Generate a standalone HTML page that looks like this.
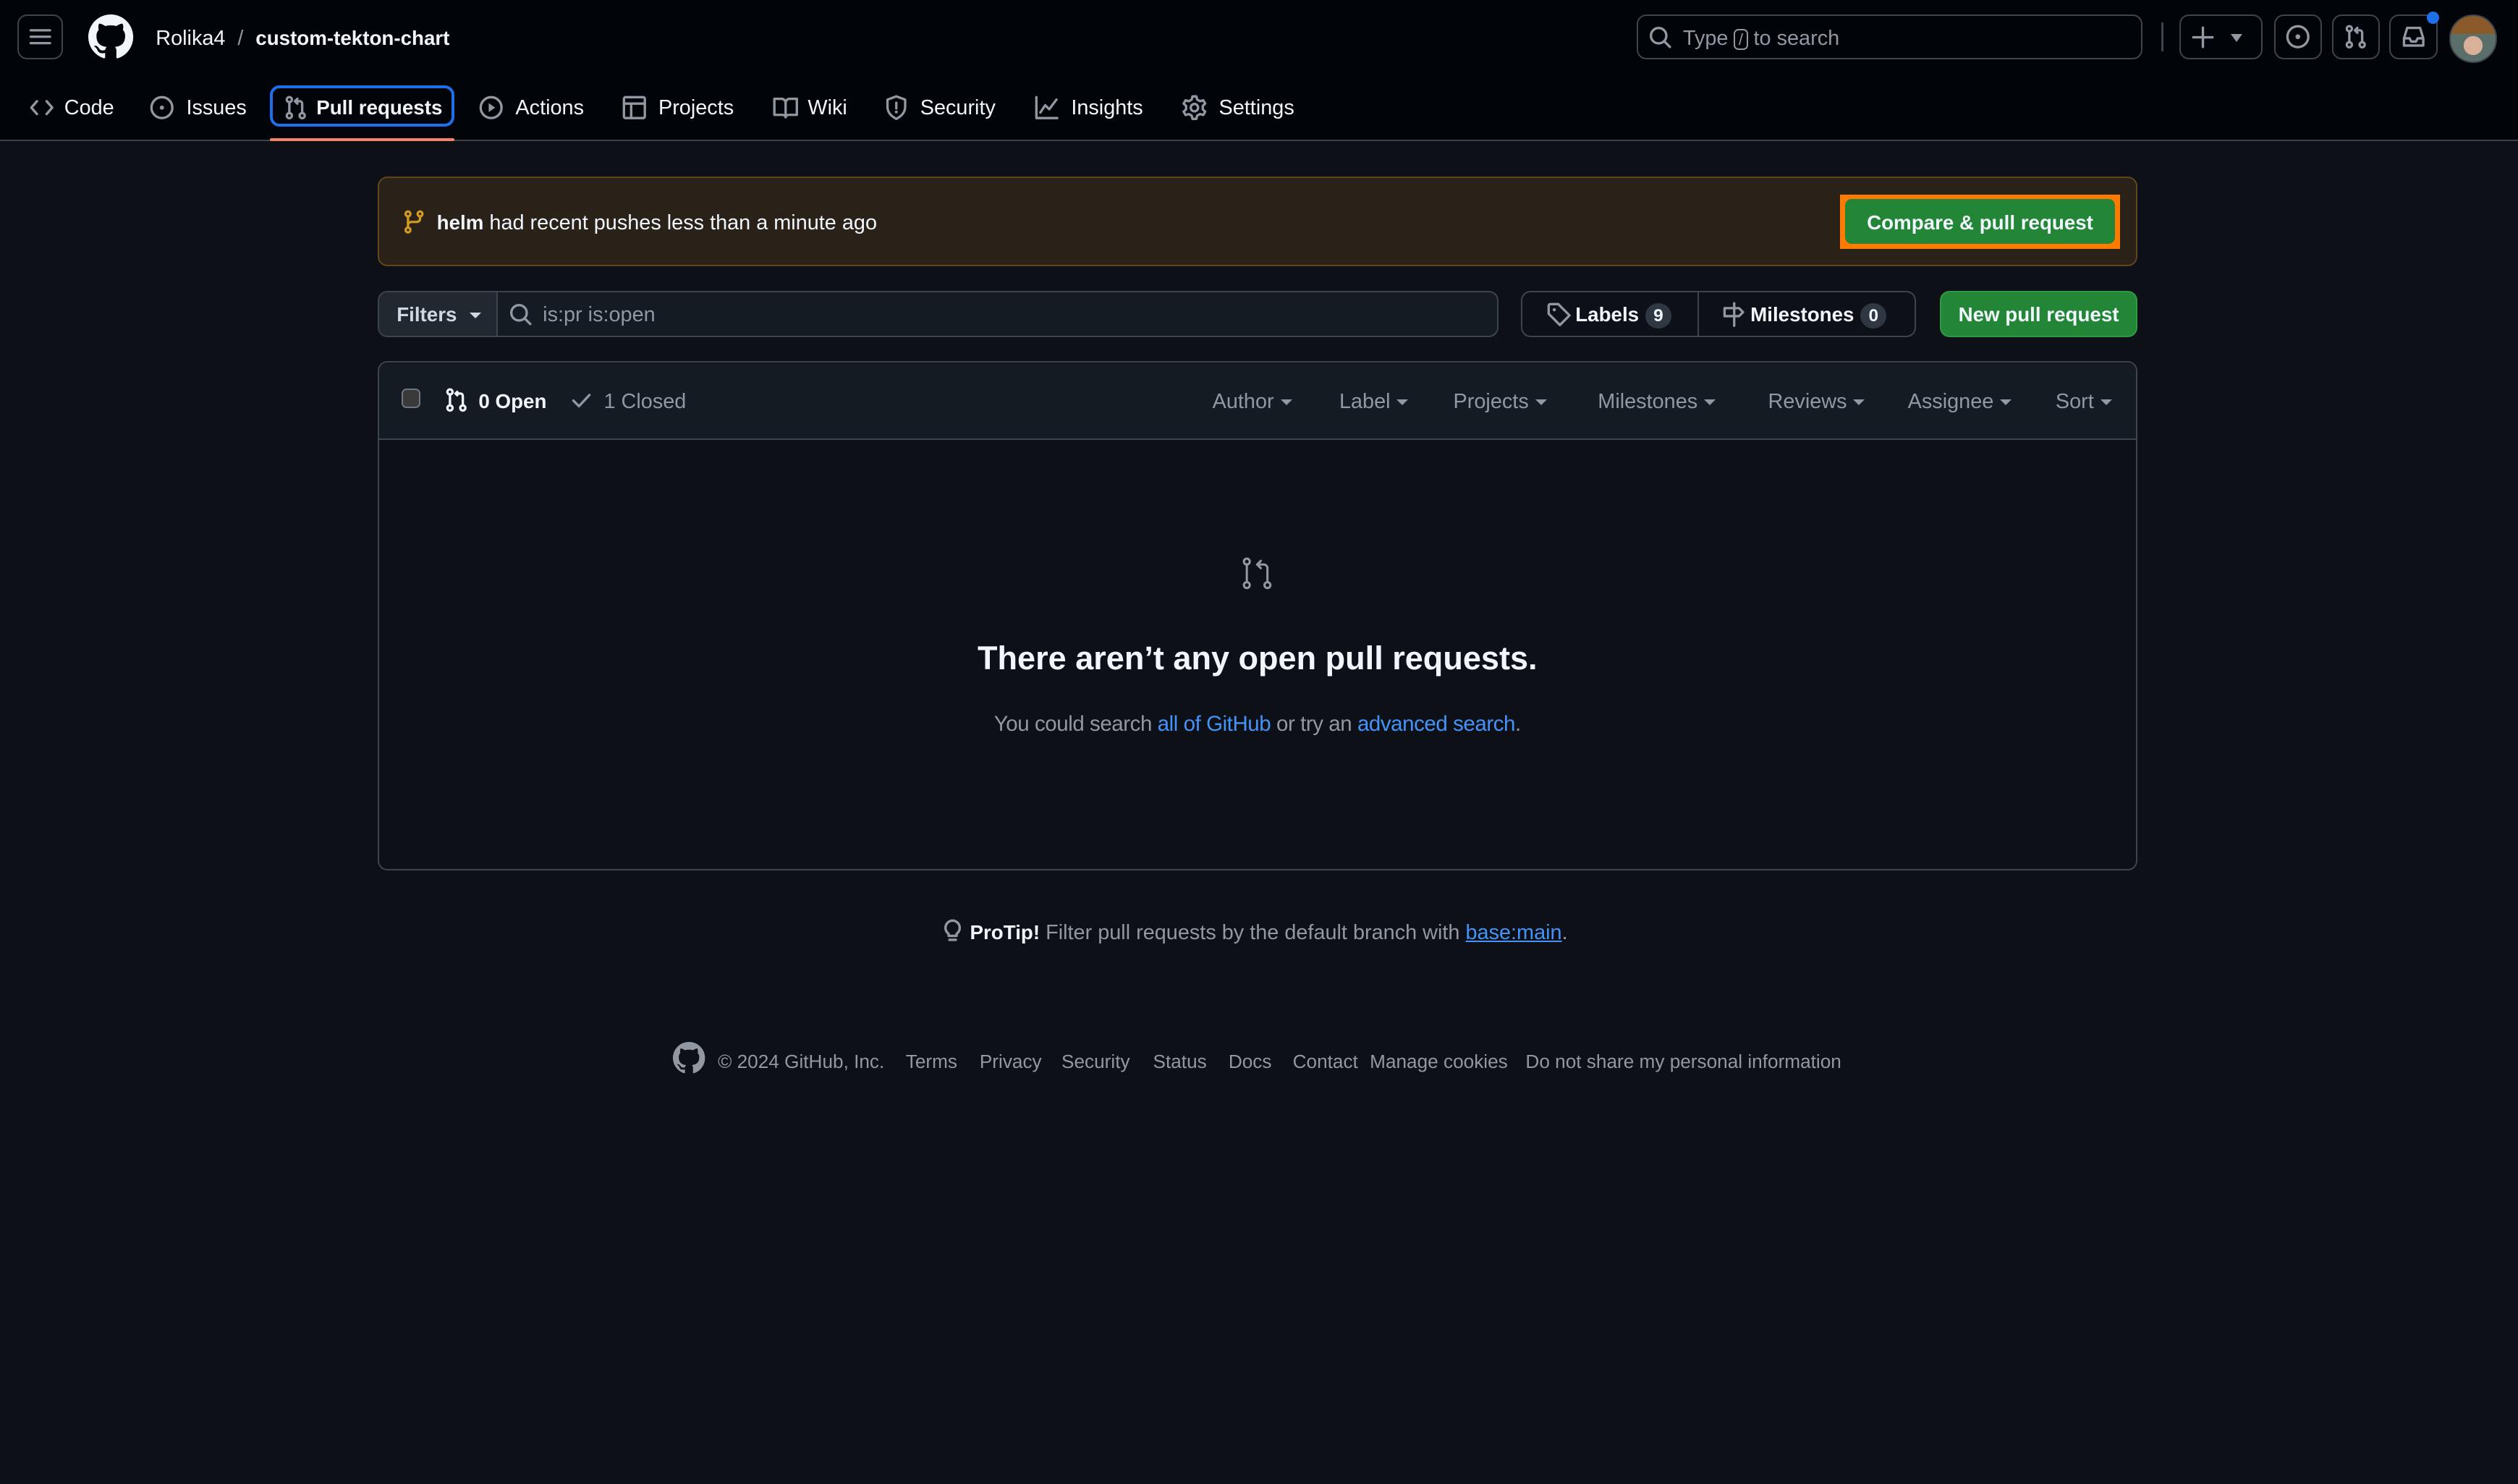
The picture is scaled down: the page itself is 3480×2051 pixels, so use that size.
<!DOCTYPE html>
<html><head><meta charset="utf-8">
<style>
html,body{margin:0;padding:0;background:#0d1117;}
body{width:3480px;height:2050px;overflow:hidden;}
#r{position:relative;width:1568px;height:924px;zoom:2.2194;background:#0d1117;font-family:"Liberation Sans",sans-serif;color:#f0f6fc;font-size:13px;}
.a{position:absolute;white-space:nowrap;line-height:20px;margin-top:1px;}
svg{position:absolute;overflow:visible;}
.ic{fill:none;stroke:#9198a1;stroke-width:1.5;stroke-linecap:round;stroke-linejoin:round;}
.btn{position:absolute;box-sizing:border-box;border:1px solid #3d444d;border-radius:6px;}
.m{color:#9198a1;}
.b{font-weight:bold;font-size:12.5px;}
.car{display:inline-block;width:0;height:0;border-left:4px solid transparent;border-right:4px solid transparent;border-top:4px solid currentColor;vertical-align:middle;margin-left:4px;}
.cnt{display:inline-block;background:#2f3742;border-radius:10px;padding:0 5px;font-size:11px;line-height:16px;margin-left:4px;}
a{color:#4493f8;text-decoration:none;}
</style></head><body><div id="r">
<div style="position:absolute;left:0;top:0;width:1568px;height:88px;background:#010409;border-bottom:1px solid #3d444d;box-sizing:border-box;"></div>
<div class="btn" style="left:11px;top:9px;width:28px;height:28px;"></div>
<svg style="left:17px;top:15px" width="16" height="16"><path class="ic" d="M2 4h12M2 8h12M2 12h12"/></svg>
<svg style="left:55px;top:9px" width="28" height="28" viewBox="0 0 16 16"><path fill="#f0f6fc" d="M8 0c4.42 0 8 3.58 8 8a8.013 8.013 0 0 1-5.45 7.59c-.4.08-.55-.17-.55-.38 0-.27.01-1.13.01-2.2 0-.75-.25-1.23-.54-1.48 1.78-.2 3.65-.88 3.65-3.95 0-.88-.31-1.59-.82-2.150.08-.2.36-1.02-.08-2.12 0 0-.67-.22-2.2.82-.64-.18-1.32-.27-2-.27-.68 0-1.36.09-2 .27-1.53-1.03-2.2-.82-2.2-.82-.44 1.1-.16 1.92-.08 2.12-.51.56-.82 1.28-.82 2.15 0 3.06 1.86 3.75 3.64 3.95-.23.2-.44.55-.51 1.07-.46.21-1.61.55-2.33-.66-.15-.24-.6-.83-1.23-.82-.67.01-.27.38.01.53.34.19.73.9.82 1.13.16.45.68 1.31 2.69.94 0 .67.01 1.3.01 1.49 0 .21-.15.45-.55.38A7.995 7.995 0 0 1 0 8c0-4.42 3.58-8 8-8Z"/></svg>
<div class="a" style="left:97px;top:13px;">Rolika4 <span class="m" style="margin:0 4px;">/</span> <span class="b">custom-tekton-chart</span></div>

<div class="btn" style="left:1019px;top:9px;width:315px;height:28px;"></div>
<svg style="left:1027px;top:16px" width="14" height="14"><circle class="ic" cx="6" cy="6" r="4.8"/><path class="ic" d="M9.5 9.5l3.5 3.5"/></svg>
<div class="a m" style="left:1048px;top:13px;">Type <span style="border:1px solid #9198a1;border-radius:3px;padding:0 2px;font-size:10px;line-height:13px;">/</span> to search</div>
<div style="position:absolute;left:1346px;top:14px;width:1px;height:18px;background:#3d444d"></div>
<div class="btn" style="left:1357px;top:9px;width:52px;height:28px;"></div>
<svg style="left:1365px;top:16px" width="14" height="14"><path class="ic" d="M7 1v12M1 7h12"/></svg>
<div style="position:absolute;left:1389px;top:21px;width:0;height:0;border-left:4px solid transparent;border-right:4px solid transparent;border-top:5px solid #9198a1;"></div>
<div class="btn" style="left:1416px;top:9px;width:30px;height:28px;"></div>
<svg style="left:1423px;top:15px" width="16" height="16"><circle class="ic" cx="8" cy="8" r="6.5"/><circle cx="8" cy="8" r="1.5" fill="#9198a1"/></svg>
<div class="btn" style="left:1452px;top:9px;width:30px;height:28px;"></div>
<svg style="left:1459px;top:15px" width="16" height="16"><circle class="ic" cx="4" cy="3" r="1.6"/><circle class="ic" cx="4" cy="13" r="1.6"/><circle class="ic" cx="12" cy="13" r="1.6"/><path class="ic" d="M4 4.6v6.8M12 11.4V5.5a1.5 1.5 0 0 0-1.5-1.5H7.5M9 2.5L7.5 4 9 5.5"/></svg>
<div class="btn" style="left:1488px;top:9px;width:30px;height:28px;"></div>
<svg style="left:1495px;top:15px" width="16" height="16"><path class="ic" d="M2 9l2-6.5h8L14 9v4.5H2zM2 9h3.5l1 2h3l1-2H14"/></svg>
<div style="position:absolute;left:1511px;top:7px;width:8px;height:8px;border-radius:50%;background:#1f6feb;"></div>
<div style="position:absolute;left:1525px;top:9px;width:30px;height:30px;border-radius:50%;border:1px solid #3d444d;box-sizing:border-box;background:radial-gradient(circle at 50% 65%,#d9b19a 0 25%,transparent 26%),linear-gradient(#8b5a2b 0 40%,#5a6f6a 40% 100%);overflow:hidden;"></div>

<svg style="left:18px;top:59px" width="16" height="16"><path class="ic" d="M5 4L1.5 8 5 12M11 4l3.5 4L11 12"/></svg>
<div class="a" style="left:40px;top:56px;">Code</div>
<svg style="left:93px;top:59px" width="16" height="16"><circle class="ic" cx="8" cy="8" r="6.5"/><circle cx="8" cy="8" r="1.3" fill="#9198a1"/></svg>
<div class="a" style="left:116px;top:56px;">Issues</div>
<div style="position:absolute;left:168px;top:53px;width:115px;height:26px;border:2px solid #1f6feb;border-radius:6px;box-sizing:border-box;"></div>
<svg style="left:176px;top:59px" width="16" height="16"><circle class="ic" cx="4" cy="3" r="1.6"/><circle class="ic" cx="4" cy="13" r="1.6"/><circle class="ic" cx="12" cy="13" r="1.6"/><path class="ic" d="M4 4.6v6.8M12 11.4V5.5a1.5 1.5 0 0 0-1.5-1.5H7.5M9 2.5L7.5 4 9 5.5"/></svg>
<div class="a b" style="left:197px;top:56px;">Pull requests</div>
<div style="position:absolute;left:168px;top:86px;width:115px;height:2px;background:#f78166;border-radius:2px;"></div>
<svg style="left:298px;top:59px" width="16" height="16"><circle class="ic" cx="8" cy="8" r="6.5"/><path d="M6.5 5.2v5.6L10.5 8z" fill="#9198a1"/></svg>
<div class="a" style="left:321px;top:56px;">Actions</div>
<svg style="left:387px;top:59px" width="16" height="16"><rect class="ic" x="1.5" y="1.5" width="13" height="13" rx="1"/><path class="ic" d="M1.5 5.5h13M6 5.5v9"/></svg>
<div class="a" style="left:410px;top:56px;">Projects</div>
<svg style="left:481px;top:59px" width="16" height="16"><path class="ic" d="M1 2.5h4.5A2.5 2.5 0 0 1 8 5v9a2 2 0 0 0-2-1.5H1zM15 2.5h-4.5A2.5 2.5 0 0 0 8 5v9a2 2 0 0 1 2-1.5h5z"/></svg>
<div class="a" style="left:503px;top:56px;">Wiki</div>
<svg style="left:550px;top:59px" width="16" height="16"><path class="ic" d="M8 1L2.5 3v4.5c0 3.5 2.5 6 5.5 7.5 3-1.5 5.5-4 5.5-7.5V3zM8 5v3.5"/><circle cx="8" cy="10.7" r=".9" fill="#9198a1"/></svg>
<div class="a" style="left:573px;top:56px;">Security</div>
<svg style="left:644px;top:59px" width="16" height="16"><path class="ic" d="M1.5 1.5v13h13M4 11l3-4.5 2.5 2.5L14 3"/></svg>
<div class="a" style="left:667px;top:56px;">Insights</div>
<svg style="left:736px;top:59px" width="16" height="16"><circle class="ic" cx="8" cy="8" r="2.3"/><path class="ic" d="M6.8 1h2.4l.5 2 1.8 1 2-.6 1.2 2.1-1.5 1.4v2.2l1.5 1.4-1.2 2.1-2-.6-1.8 1-.5 2H6.8l-.5-2-1.8-1-2 .6-1.2-2.1L2.8 9.1V6.9L1.3 5.5l1.2-2.1 2 .6 1.8-1z"/></svg>
<div class="a" style="left:759px;top:56px;">Settings</div>

<div style="position:absolute;left:235px;top:110px;width:1096px;height:56px;background:#2a2119;border:1px solid #5e4718;border-radius:6px;box-sizing:border-box;"></div>
<svg style="left:250px;top:130px" width="16" height="16"><circle fill="none" stroke="#d29922" stroke-width="1.5" cx="4" cy="3" r="1.5"/><circle fill="none" stroke="#d29922" stroke-width="1.5" cx="11.5" cy="3" r="1.5"/><circle fill="none" stroke="#d29922" stroke-width="1.5" cx="4" cy="13" r="1.5"/><path fill="none" stroke="#d29922" stroke-width="1.5" d="M4 4.5v7M11.5 4.5v1.5a2 2 0 0 1-2 2H6a2 2 0 0 0-2 2"/></svg>
<div class="a" style="left:272px;top:128px;"><span class="b">helm</span> had recent pushes less than a minute ago</div>
<div style="position:absolute;left:1146px;top:121px;width:174px;height:34px;background:#ff7b00;"></div>
<div style="position:absolute;left:1149px;top:124px;width:168px;height:28px;background:#238636;border-radius:4px;"></div>
<div class="a b" style="left:1149px;top:128px;width:168px;text-align:center;">Compare &amp; pull request</div>

<div class="btn" style="left:235px;top:181px;width:698px;height:29px;background:#151b23;"></div>
<div style="position:absolute;left:236px;top:182px;width:73px;height:27px;background:#212830;border-right:1px solid #3d444d;border-radius:5px 0 0 5px;"></div>
<div class="a b" style="left:247px;top:185px;color:#d1d7e0;">Filters<span class="car" style="margin-left:8px"></span></div>
<svg style="left:317px;top:189px" width="14" height="14"><circle class="ic" cx="6" cy="6" r="4.8"/><path class="ic" d="M9.5 9.5l3.5 3.5"/></svg>
<div class="a m" style="left:338px;top:185px;">is:pr is:open</div>
<div class="btn" style="left:947px;top:181px;width:246px;height:29px;"></div>
<div style="position:absolute;left:1057px;top:182px;width:1px;height:27px;background:#3d444d;"></div>
<svg style="left:963px;top:188px" width="16" height="16"><path class="ic" d="M1.5 2.5v5l7 7 6-6-7-7h-5a1 1 0 0 0-1 1z"/><circle cx="5" cy="5" r="1" fill="#9198a1"/></svg>
<div class="a b" style="left:981px;top:185px;">Labels<span class="cnt">9</span></div>
<svg style="left:1072px;top:188px" width="16" height="16"><path class="ic" d="M8 1v14M2 4h9l2.5 2.5L11 9H2z"/></svg>
<div class="a b" style="left:1090px;top:185px;">Milestones<span class="cnt">0</span></div>
<div style="position:absolute;left:1208px;top:181px;width:123px;height:29px;background:#238636;border-radius:6px;border:1px solid #2f9a45;box-sizing:border-box;"></div>
<div class="a b" style="left:1208px;top:185px;width:123px;text-align:center;">New pull request</div>

<div class="btn" style="left:235px;top:225px;width:1096px;height:317px;"></div>
<div style="position:absolute;left:236px;top:226px;width:1094px;height:47px;background:#151b23;border-bottom:1px solid #3d444d;border-radius:5px 5px 0 0;"></div>
<div style="position:absolute;left:250px;top:242px;width:12px;height:12px;border:1px solid #6e7681;border-radius:3px;background:#3a3a3a;box-sizing:border-box;"></div>
<svg style="left:276px;top:241px" width="16" height="16"><circle fill="none" stroke="#f0f6fc" stroke-width="1.5" cx="4" cy="3" r="1.6"/><circle fill="none" stroke="#f0f6fc" stroke-width="1.5" cx="4" cy="13" r="1.6"/><circle fill="none" stroke="#f0f6fc" stroke-width="1.5" cx="12" cy="13" r="1.6"/><path fill="none" stroke="#f0f6fc" stroke-width="1.5" d="M4 4.6v6.8M12 11.4V5.5a1.5 1.5 0 0 0-1.5-1.5H7.5M9 2.5L7.5 4 9 5.5"/></svg>
<div class="a b" style="left:298px;top:239px;">0 Open</div>
<svg style="left:355px;top:242px" width="14" height="14"><path class="ic" d="M2 7.5l3.5 3.5L12 4"/></svg>
<div class="a m" style="left:376px;top:239px;">1 Closed</div>
<div class="a m" style="left:755px;top:239px;">Author<span class="car"></span></div>
<div class="a m" style="left:834px;top:239px;">Label<span class="car"></span></div>
<div class="a m" style="left:905px;top:239px;">Projects<span class="car"></span></div>
<div class="a m" style="left:995px;top:239px;">Milestones<span class="car"></span></div>
<div class="a m" style="left:1101px;top:239px;">Reviews<span class="car"></span></div>
<div class="a m" style="left:1188px;top:239px;">Assignee<span class="car"></span></div>
<div class="a m" style="left:1280px;top:239px;">Sort<span class="car"></span></div>

<svg style="left:772px;top:346px" width="22" height="22" viewBox="0 0 24 24"><circle class="ic" cx="5" cy="4" r="2"/><circle class="ic" cx="5" cy="20" r="2"/><circle class="ic" cx="19" cy="20" r="2"/><path class="ic" d="M5 6v12M19 18V8.5A2.5 2.5 0 0 0 16.5 6H12M14.5 3.5L12 6l2.5 2.5"/></svg>
<div class="a" style="left:236px;top:394px;width:1094px;text-align:center;font-size:20.3px;line-height:30px;font-weight:bold;">There aren’t any open pull requests.</div>
<div class="a m" style="left:236px;top:440px;width:1094px;text-align:center;font-size:13.3px;letter-spacing:-0.2px;">You could search <a>all of GitHub</a> or try an <a>advanced search</a>.</div>

<svg style="left:586px;top:572px" width="14" height="16"><path class="ic" d="M7 1.5a4.5 4.5 0 0 0-2.5 8.2V11h5V9.7A4.5 4.5 0 0 0 7 1.5zM5 13.5h4"/></svg>
<div class="a m" style="left:604px;top:570px;"><span class="b" style="color:#f0f6fc">ProTip!</span> Filter pull requests by the default branch with <a style="text-decoration:underline">base:main</a>.</div>

<svg style="left:419px;top:649px" width="20" height="20" viewBox="0 0 16 16"><path fill="#9198a1" d="M8 0c4.42 0 8 3.58 8 8a8.013 8.013 0 0 1-5.45 7.59c-.4.08-.55-.17-.55-.38 0-.27.01-1.13.01-2.2 0-.75-.25-1.23-.54-1.48 1.78-.2 3.65-.88 3.65-3.95 0-.88-.31-1.59-.82-2.15.08-.2.36-1.02-.08-2.12 0 0-.67-.22-2.2.82-.64-.18-1.32-.27-2-.27-.68 0-1.36.09-2 .27-1.53-1.03-2.2-.82-2.2-.82-.44 1.1-.16 1.92-.08 2.12-.51.56-.82 1.28-.82 2.15 0 3.06 1.86 3.75 3.64 3.95-.23.2-.44.55-.51 1.07-.46.21-1.61.55-2.33-.66-.15-.24-.6-.83-1.23-.82-.67.01-.27.38.01.53.34.19.73.9.82 1.13.16.45.68 1.31 2.69.94 0 .67.01 1.3.01 1.49 0 .21-.15.45-.55.38A7.995 7.995 0 0 1 0 8c0-4.42 3.58-8 8-8Z"/></svg>
<div class="a m" style="left:447px;top:650px;font-size:11.8px;">© 2024 GitHub, Inc.</div>
<div class="a m" style="left:564px;top:650px;font-size:11.8px;">Terms</div>
<div class="a m" style="left:610px;top:650px;font-size:11.8px;">Privacy</div>
<div class="a m" style="left:661px;top:650px;font-size:11.8px;">Security</div>
<div class="a m" style="left:718px;top:650px;font-size:11.8px;">Status</div>
<div class="a m" style="left:765px;top:650px;font-size:11.8px;">Docs</div>
<div class="a m" style="left:805px;top:650px;font-size:11.8px;">Contact</div>
<div class="a m" style="left:853px;top:650px;font-size:11.8px;">Manage cookies</div>
<div class="a m" style="left:950px;top:650px;font-size:11.8px;">Do not share my personal information</div>
</div></body></html>
